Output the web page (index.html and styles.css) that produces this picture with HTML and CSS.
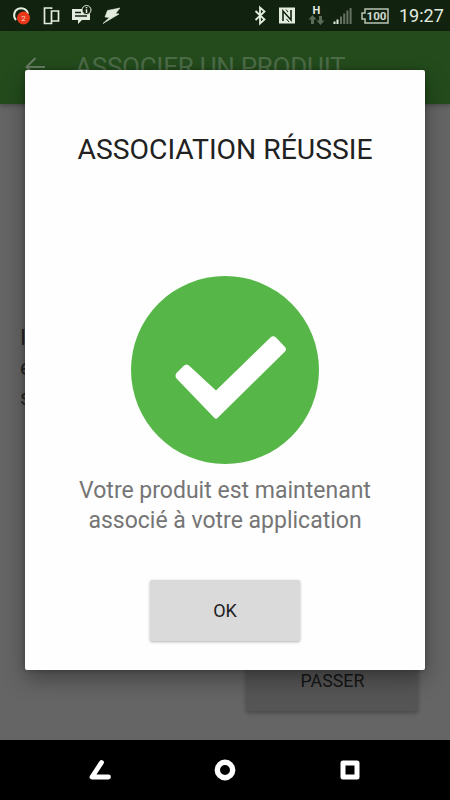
FILE: index.html
```html
<!DOCTYPE html>
<html lang="fr">
<head>
<meta charset="utf-8">
<title>Association réussie</title>
<link rel="stylesheet" href="styles.css">
</head>
<body>
<div class="screen">
  <header class="status">
    <svg class="status-icons" width="375" height="31" viewBox="0 0 375 31">
      <g fill="none" stroke="#e4ece0" stroke-width="2">
        <path d="M16 20A7 7 0 1 1 28 14"/>
        <path d="M51.500 9V8H44.500V23.500H51.500V21M51.500 11H58.500V21H51.500Z" stroke-width="1.700"/>
      </g>
      <circle cx="23.500" cy="18" r="6.500" fill="#e8381b"/>
      <text class="badge" x="23.500" y="21" text-anchor="middle">2</text>
      <path d="M72 9H90V20H82L78 24V20H72Z" fill="#e4ece0"/>
      <path d="M75 12.500H81M75 16H87" stroke="#11230f" stroke-width="1.500"/>
      <circle cx="86.500" cy="10" r="4.500" fill="#11230f" stroke="#e4ece0"/>
      <path d="M86.500 7V8.300M86.500 9.300V13" stroke="#e4ece0" stroke-width="1.500"/>
      <path d="M107.500 10.500L120 8L115.500 13.500L119 14L103 23.500L109.500 17.500L105 17Z" fill="#e4ece0" stroke="#e4ece0" stroke-width=".6" stroke-linejoin="round"/>
      <path d="M255.500 11L264.500 19.500L260 23.500V7.500L264.500 11.500L255.500 20" fill="none" stroke="#e4ece0" stroke-width="1.800"/>
      <rect x="279" y="7.500" width="16" height="16" fill="#e4ece0"/>
      <path d="M283 21V11L291 20V10" fill="none" stroke="#11230f" stroke-width="1.600"/>
      <path d="M286 9.500L288 12M286.500 19L289 22" stroke="#11230f"/>
      <text class="network" x="316.500" y="13.500" text-anchor="middle">H</text>
      <path d="M312.500 15L316.500 19.500H314V24H311V19.500H308.500ZM320.500 25L316.500 20.500H319V16H322V20.500H324.500Z" fill="#5c6b59"/>
      <path d="M334.500 24V21.500M337.500 24V19.500" stroke="#e4ece0" stroke-width="2"/>
      <path d="M341 24V16.500M344.200 24V13.500M347.400 24V10.500M350.600 24V8" stroke="#657262" stroke-width="2"/>
    </svg>
    <svg class="battery" width="28" height="16" viewBox="0 0 28 16">
      <path d="M4 1H27V15H4V11H1V5H4Z" fill="none" stroke="#b8c2b4" stroke-width="1.500"/>
      <text class="charge" x="15.500" y="12" text-anchor="middle" textLength="20" lengthAdjust="spacingAndGlyphs">100</text>
    </svg>
    <span class="clock">19:27</span>
  </header>
  <div class="appbar">
    <svg class="back" width="22" height="20" viewBox="0 0 22 20"><path d="M20 10H2M10.500 1L1.500 10L10.500 19" fill="none" stroke="#677b62" stroke-width="2"/></svg>
    <span class="appbar-title">ASSOCIER UN PRODUIT</span>
  </div>
  <main class="page">
    <p class="behind">I<br>e<br>s</p>
    <button class="skip">PASSER</button>
  </main>
  <nav class="navbar">
    <svg width="24" height="22" viewBox="0 0 24 22"><path d="M14.500 3.500L5 18H21.500" fill="none" stroke="#fff" stroke-width="4.800" stroke-linecap="round" stroke-linejoin="round"/></svg>
    <svg width="22" height="22" viewBox="0 0 22 22"><circle cx="11" cy="11" r="7.700" fill="none" stroke="#fff" stroke-width="5.400"/></svg>
    <svg width="22" height="22" viewBox="0 0 22 22"><rect x="4" y="4" width="14" height="14" fill="none" stroke="#fff" stroke-width="5" stroke-linejoin="round"/></svg>
  </nav>
  <section class="dialog">
    <h1>ASSOCIATION RÉUSSIE</h1>
    <svg class="success" width="188" height="188" viewBox="0 0 188 188">
      <circle cx="94" cy="94" r="94" fill="#56b748"/>
      <path d="M57 89Q55 87.500 52.500 90L46 96.500Q43 99.500 46 103L83 141.500Q85 144 87 141.500L153.500 76Q156.500 73 153.500 70.500L145 61.500Q142 59 139.500 61.500L85 114.500L58.500 90Z" fill="#fff"/>
    </svg>
    <p class="message">Votre produit est maintenant<br>associé à votre application</p>
    <button class="ok">OK</button>
  </section>
</div>
</body>
</html>
```

FILE: styles.css
```css
* { box-sizing: border-box; }
body { margin: 0; font-family: Roboto, "Liberation Sans", sans-serif; }
.screen {
  position: relative;
  display: flex;
  flex-direction: column;
  width: 450px;
  height: 800px;
  overflow: hidden;
  background: #656565;
}
.status {
  display: flex;
  align-items: center;
  height: 31px;
  background: #11230f;
}
.status-icons { flex: none; margin-right: -14px; }
.battery { flex: none; }
.badge { fill: #ffd5c5; font-size: 8px; }
.network { fill: #e4ece0; font-size: 11px; font-weight: 700; }
.charge { fill: #d3dbcf; font-size: 11px; font-weight: 700; }
.clock {
  margin-left: 10px;
  color: #e4ece0;
  font-size: 18px;
  line-height: 31px;
  white-space: nowrap;
}
.appbar {
  display: flex;
  align-items: center;
  height: 73px;
  padding: 0 0 2px 25px;
  background: #234b1c;
  box-shadow: 0 2px 4px rgba(0, 0, 0, .25);
  z-index: 1;
}
.appbar-title {
  margin-left: 28px;
  color: #4d6c48;
  font-size: 26px;
  letter-spacing: -.26px;
  white-space: nowrap;
}
.page {
  display: flex;
  flex-direction: column;
  justify-content: space-between;
  height: 636px;
  padding: 219px 32px 29px 20px;
}
.behind {
  margin: 0;
  color: #262626;
  font-size: 22px;
  line-height: 30px;
}
button { border: 0; padding: 0; font-family: inherit; }
.skip {
  align-self: flex-end;
  width: 172px;
  height: 60px;
  padding: 0 0 2px 1px;
  border-radius: 2px;
  background: #555;
  box-shadow: 0 2px 4px rgba(0, 0, 0, .3);
  color: #161616;
  font-size: 17.800px;
}
.navbar {
  display: flex;
  align-items: center;
  justify-content: space-between;
  height: 60px;
  padding: 0 89px 0 87px;
  background: #000;
}
.dialog {
  position: absolute;
  top: 70px;
  left: 25px;
  z-index: 2;
  display: flex;
  flex-direction: column;
  align-items: center;
  width: 400px;
  height: 600px;
  padding-top: 60px;
  border-radius: 2px;
  background: #fefefe;
  box-shadow: 0 9px 22px rgba(0, 0, 0, .35), 0 0 4px rgba(0, 0, 0, .25);
}
h1 {
  margin: 0;
  color: #212121;
  font-size: 28.300px;
  font-weight: 400;
  line-height: 40px;
  white-space: nowrap;
}
.success { flex: none; margin-top: 106px; }
.message {
  margin: 12px 0 0;
  color: #757575;
  font-size: 23px;
  line-height: 30px;
  text-align: center;
  white-space: nowrap;
}
.ok {
  width: 150px;
  height: 61px;
  margin-top: 44px;
  padding-bottom: 1px;
  border-radius: 2px;
  background: #dadada;
  box-shadow: 0 1px 3px rgba(0, 0, 0, .3);
  color: #202020;
  font-size: 18px;
}
```
